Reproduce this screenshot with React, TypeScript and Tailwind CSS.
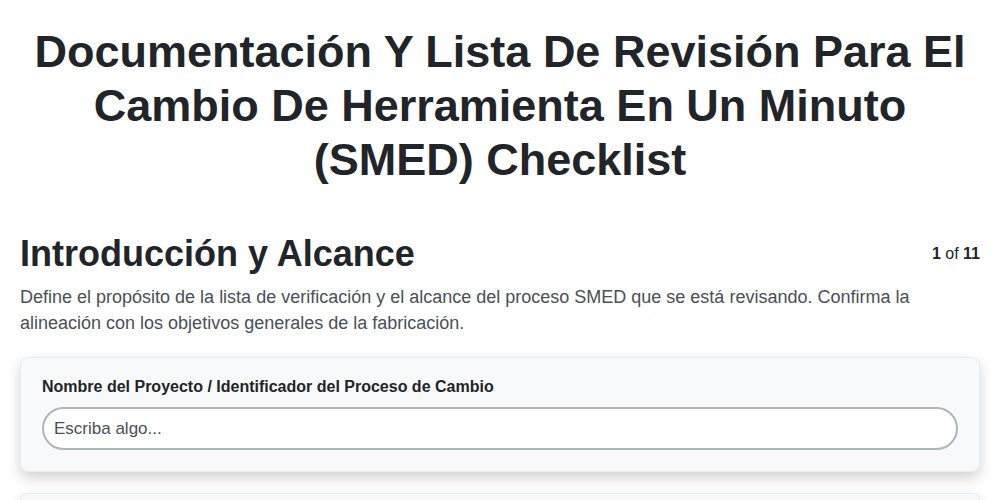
export default function App() {
  return (
    <div
      className="min-h-screen bg-white text-[#212529] px-5"
      style={{ fontFamily: '"Liberation Sans", Arial, sans-serif' }}
    >
      {/* Title */}
      <h1 className="pt-[25px] text-center text-[45px] leading-[54px] font-bold">
        Documentación Y Lista De Revisión Para El
        <br />
        Cambio De Herramienta En Un Minuto
        <br />
        (SMED) Checklist
      </h1>

      {/* Section header */}
      <div className="mt-[45px] flex items-start justify-between">
        <h2 className="text-[36px] leading-[43px] font-bold">Introducción y Alcance</h2>
        <span className="mt-[10px] text-base leading-6">
          <b>1</b> of <b>11</b>
        </span>
      </div>
      <p className="mt-[9px] text-[18px] leading-[26px] text-[#495057] pr-10">
        Define el propósito de la lista de verificación y el alcance del proceso SMED que se está revisando. Confirma la
        alineación con los objetivos generales de la fabricación.
      </p>

      {/* Card */}
      <div className="mt-[21px] rounded-lg border border-[#e9ecef] bg-[#f8f9fa] px-[21px] pt-[17px] pb-[21px] shadow-[0_6px_14px_rgba(0,0,0,0.18)]">
        <label className="block text-base leading-6 font-bold">
          Nombre del Proyecto / Identificador del Proceso de Cambio
        </label>
        <input
          type="text"
          placeholder="Escriba algo..."
          className="mt-2 block w-full h-[43px] rounded-full border-2 border-[#adb5bd] bg-white px-[10px] text-[17px] text-[#212529] placeholder:text-[#495057] outline-none"
        />
      </div>

      <div className="mt-[21px] h-20 rounded-lg border border-[#e9ecef] bg-[#f8f9fa] shadow-[0_6px_14px_rgba(0,0,0,0.18)]" />
    </div>
  );
}
